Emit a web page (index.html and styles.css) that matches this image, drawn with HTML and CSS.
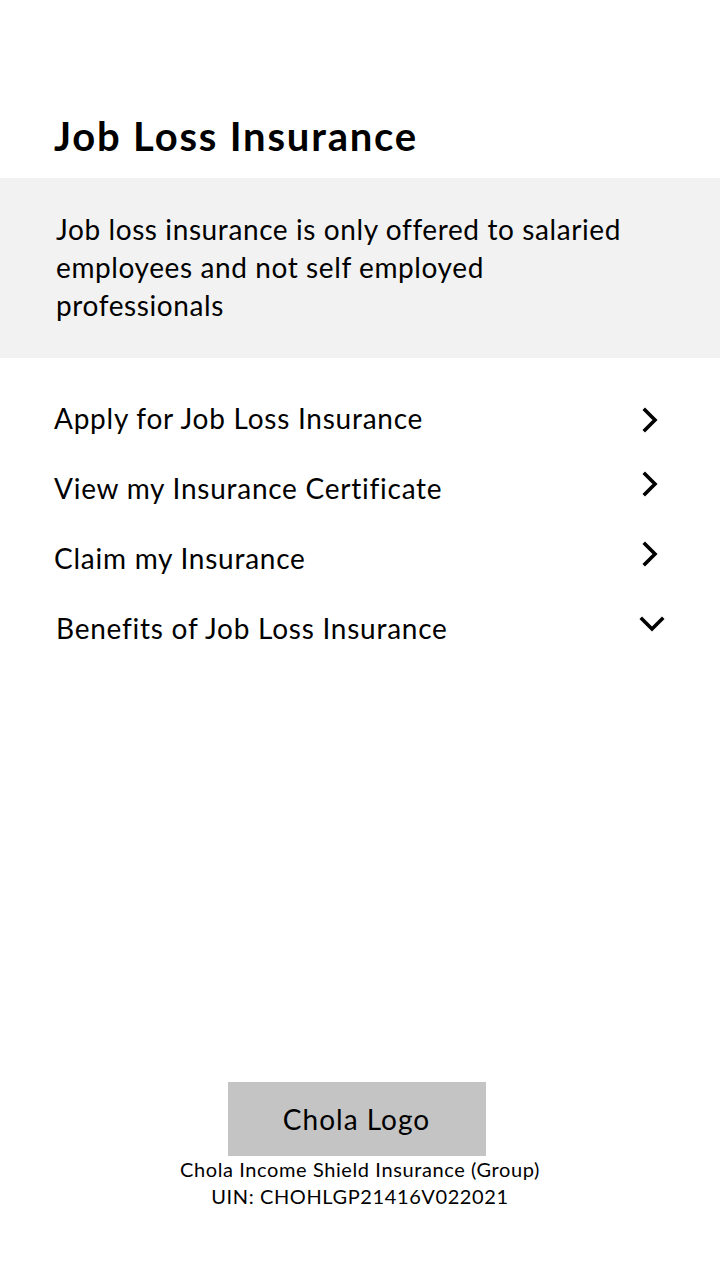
FILE: index.html
```html
<!DOCTYPE html>
<html lang="en">
<head>
<meta charset="utf-8">
<title>Job Loss Insurance</title>
<link rel="stylesheet" href="styles.css">
</head>
<body>
<div class="page">
  <h1 class="title">Job Loss Insurance</h1>
  <div class="notice">
    <p>Job loss insurance is only offered to salaried employees and not self employed professionals</p>
  </div>
  <ul class="menu">
    <li class="item item-first">
      <span class="label">Apply for Job Loss Insurance</span>
      <svg class="chev" width="16" height="26" viewBox="0 0 16 26"><path d="M3 3 L13 13 L3 23" fill="none" stroke="#000" stroke-width="3.6" stroke-linecap="square" stroke-linejoin="miter"/></svg>
    </li>
    <li class="item item-up">
      <span class="label">View my Insurance Certificate</span>
      <svg class="chev" width="16" height="26" viewBox="0 0 16 26"><path d="M3 3 L13 13 L3 23" fill="none" stroke="#000" stroke-width="3.6" stroke-linecap="square" stroke-linejoin="miter"/></svg>
    </li>
    <li class="item item-up">
      <span class="label">Claim my Insurance</span>
      <svg class="chev" width="16" height="26" viewBox="0 0 16 26"><path d="M3 3 L13 13 L3 23" fill="none" stroke="#000" stroke-width="3.6" stroke-linecap="square" stroke-linejoin="miter"/></svg>
    </li>
    <li class="item item-down">
      <span class="label">Benefits of Job Loss Insurance</span>
      <svg class="chev-down" width="26" height="16" viewBox="0 0 26 16"><path d="M3 3 L13 13 L23 3" fill="none" stroke="#000" stroke-width="3.6" stroke-linecap="square" stroke-linejoin="miter"/></svg>
    </li>
  </ul>
  <footer class="footer">
    <div class="logo">Chola Logo</div>
    <p class="meta">Chola Income Shield Insurance (Group)<br>UIN: CHOHLGP21416V022021</p>
  </footer>
</div>
</body>
</html>
```
FILE: styles.css
```css
* { box-sizing: border-box; }
html, body { margin: 0; padding: 0; background: #fff; }
body {
  font-family: Lato, "Noto Sans", sans-serif;
  color: #000;
}
.page {
  width: 720px;
  height: 1280px;
  display: flex;
  flex-direction: column;
}
.title {
  margin: 0;
  padding: 112px 0 0 54px;
  height: 178px;
  font-size: 40px;
  font-weight: 700;
  line-height: 48px;
  letter-spacing: 1.8px;
}
.notice {
  background: #f2f2f2;
  height: 180px;
  padding: 32px 0 0 56px;
}
.notice p {
  margin: 0;
  width: 590px;
  font-size: 28px;
  line-height: 38px;
  letter-spacing: 0.6px;
}
.menu {
  list-style: none;
  margin: 0;
  padding: 25px 0 0 54px;
}
.item {
  display: flex;
  align-items: center;
  justify-content: space-between;
  height: 70px;
  padding-right: 62px;
}
.label {
  font-size: 28px;
  line-height: 40px;
  letter-spacing: 0.75px;
}
.item-first .chev { margin-top: 4px; }
.item-up .chev { margin-top: -8px; }
.item-down { padding-left: 2px; padding-right: 55px; }
.item-down .chev-down { margin-top: -8px; }
.footer {
  margin-top: auto;
  margin-bottom: 70px;
  display: flex;
  flex-direction: column;
  align-items: center;
}
.logo {
  width: 258px;
  height: 74px;
  background: #c4c4c4;
  display: flex;
  align-items: center;
  justify-content: center;
  font-size: 28px;
  letter-spacing: 1px;
  margin-left: -7px;
}
.meta {
  margin: 0;
  text-align: center;
  font-size: 20px;
  line-height: 27px;
  letter-spacing: 0.6px;
}
```
